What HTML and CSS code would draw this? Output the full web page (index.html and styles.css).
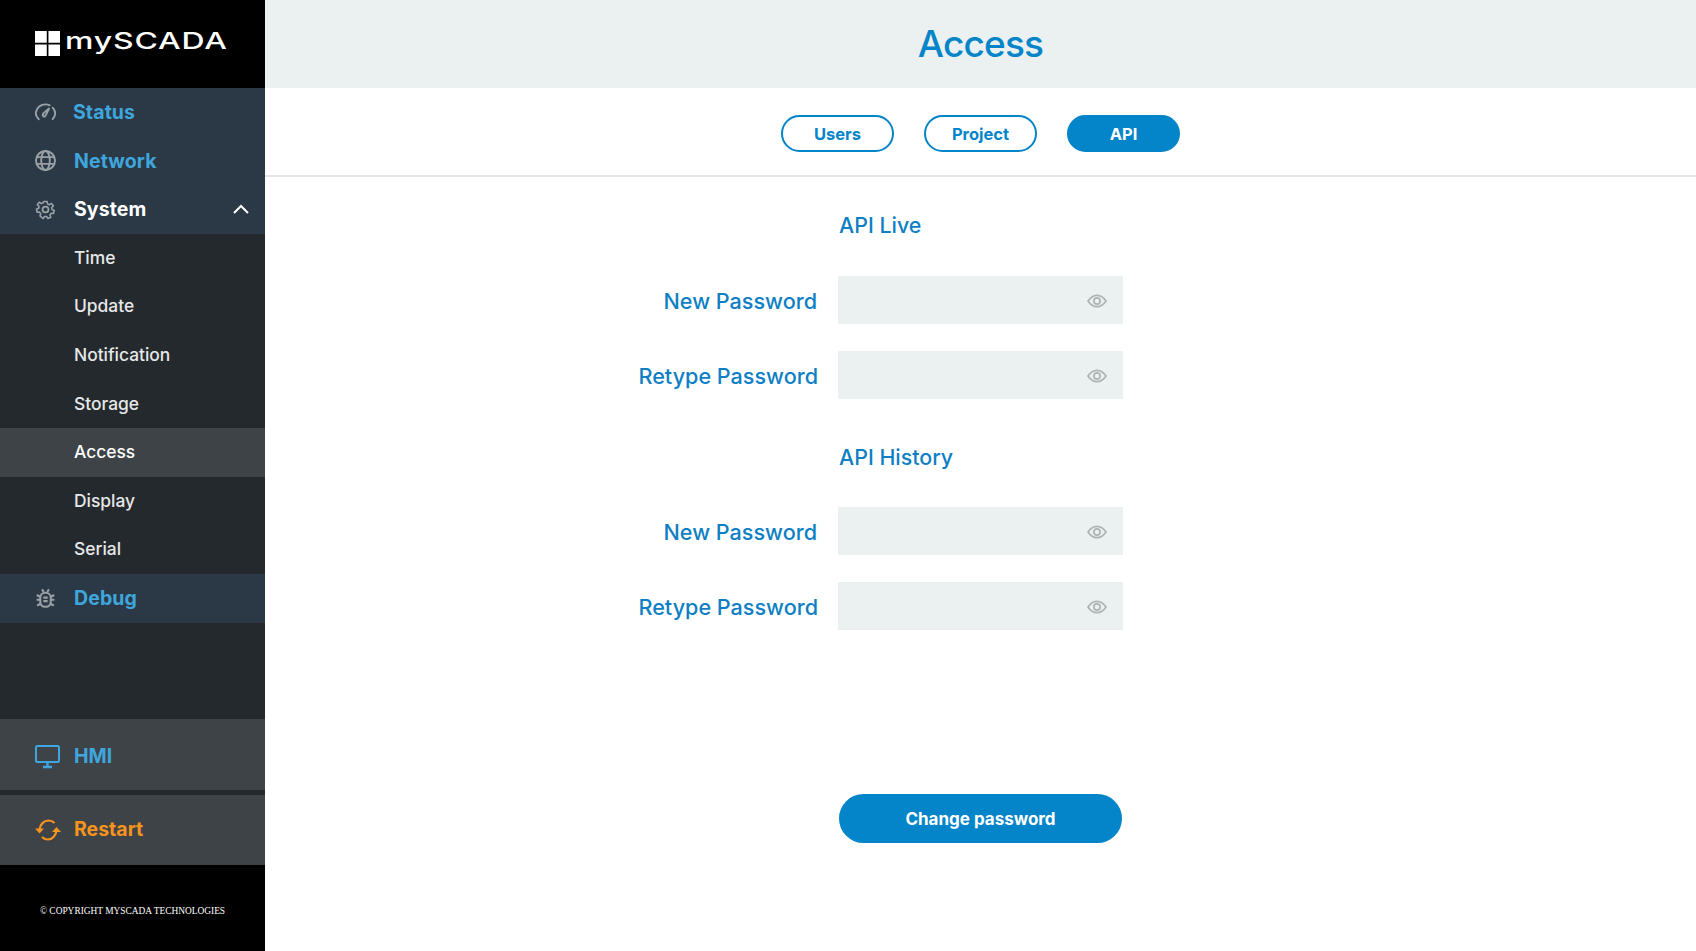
FILE: index.html
```html
<!DOCTYPE html>
<html lang="en">
<head>
<meta charset="utf-8">
<title>Access</title>
<link rel="stylesheet" href="styles.css">
</head>
<body>
<div class="app">
  <aside class="sidebar">
    <div class="brand">
      <svg class="brand-mark" viewBox="0 0 24 24"><path fill="#fff" d="M0 0h11.3v11.3H0zM12.900 0H24v11.300H12.900zM0 12.900h11.300V24H0zM12.900 12.900H24V24H12.900z"/></svg>
      <span class="brand-name">mySCADA</span>
    </div>
    <nav class="nav">
      <a class="item">
        <svg class="ico" viewBox="1 3 22 19" fill="none" stroke="#9aa1a6" stroke-width="2" stroke-linecap="round"><path d="M5 20.500C2.600 18.600 1.500 16 2 13 2.800 8.400 7 5 12 5c1.500 0 3 .3 4.300 1M19.500 8.500c2 1.900 3 4.200 2.500 7-.2 1.800-1 3.500-2.500 5"/><path d="M9.800 17.500c-.9-1-.8-2.300.2-3.300l6-5.200-3.800 7.500c-.7 1.300-1.500 1.700-2.400 1z"/></svg>
        <span class="blue status-t">Status</span>
      </a>
      <a class="item">
        <svg class="ico" viewBox="1 1 22 22" fill="none" stroke="#9aa1a6" stroke-width="2"><circle cx="12" cy="12" r="10"/><ellipse cx="12" cy="12" rx="4.500" ry="10"/><path d="M2.800 8.500h18.400M2.800 15.500h18.400"/></svg>
        <span class="blue">Network</span>
      </a>
      <a class="item">
        <svg class="ico" viewBox="0 0 24 24" fill="none" stroke="#9aa1a6" stroke-width="2" stroke-linejoin="round"><circle cx="12" cy="12" r="3.400"/><path d="M10 2h4l.6 3 2.300 1 2.600-1.700 2.400 3-2.100 2.200.4 2.500 2.800 1.100-.9 3.800-3-.1-1.500 2 1 2.800-3.500 1.700-1.700-2.500h-2.600l-1.700 2.500L5 20.100l1-2.800-1.500-2-3 .1-.9-3.800 2.800-1.100.4-2.500-2.100-2.200 2.400-3 2.600 1.700 2.300-1z" transform="translate(1.100 1.100) scale(.91)"/></svg>
        <span class="white">System</span>
        <svg class="chev" viewBox="0 0 16 10" fill="none" stroke="#fff" stroke-width="2"><path d="M1 9l7-7 7 7"/></svg>
      </a>
      <div class="subnav">
        <a class="sub">Time</a>
        <a class="sub">Update</a>
        <a class="sub">Notification</a>
        <a class="sub">Storage</a>
        <a class="sub active">Access</a>
        <a class="sub">Display</a>
        <a class="sub">Serial</a>
      </div>
      <a class="item">
        <svg class="ico" viewBox="0 0 24 24" fill="none" stroke="#9aa1a6" stroke-width="2.400"><rect x="6" y="5.500" width="12" height="16" rx="5.500"/><path d="M9.500 11h5M9.500 15h5M8 1.500l2 3M16 1.500l-2 3M2 8l4 2M22 8l-4 2M1.800 13.500H6M22.200 13.500H18M2.500 20l4-2M21.500 20l-4-2"/></svg>
        <span class="blue">Debug</span>
      </a>
    </nav>
    <a class="action first">
      <svg class="ico-lg" viewBox="0 0 26 24" fill="none" stroke="#3fa6dd" stroke-width="2"><rect x="1" y="1" width="23" height="16" rx="1.500"/><path d="M12.500 17v4M8 22h9" stroke-width="2.400"/></svg>
      <span class="blue">HMI</span>
    </a>
    <a class="action second">
      <svg class="ico-lg" viewBox="0 0 26 24" fill="none" stroke="#f7941d" stroke-width="2.200"><path d="M4.500 11.500C5 6.500 9 2.500 13.500 2.500c2.500 0 4.500 1 6 2.500"/><path d="M21.500 12c-.3 5.500-4 9.500-8.500 9.500-2.500 0-4.500-1-6-2.500"/><path fill="#f7941d" stroke="none" d="M0 10.500h9L4.500 15.500zM17 14h9l-4.500-5z"/></svg>
      <span class="orange">Restart</span>
    </a>
    <footer class="copy">© COPYRIGHT MYSCADA TECHNOLOGIES</footer>
  </aside>
  <main class="main">
    <header class="head"><h1 class="title">Access</h1></header>
    <div class="tabs">
      <button class="tab">Users</button>
      <button class="tab">Project</button>
      <button class="tab on">API</button>
    </div>
    <form class="form">
      <h2 class="section first-sec">API Live</h2>
      <label class="lab">New Password</label>
      <div class="field"><svg class="eye" viewBox="0 0 20 14" fill="none" stroke="#aeb2b3" stroke-width="1.700"><path d="M1 7c2.500-3.800 5.500-5.700 9-5.700S16.500 3.200 19 7c-2.500 3.800-5.500 5.700-9 5.700S3.500 10.800 1 7z"/><circle cx="10" cy="7" r="3.100"/></svg></div>
      <label class="lab lab2">Retype Password</label>
      <div class="field"><svg class="eye" viewBox="0 0 20 14" fill="none" stroke="#aeb2b3" stroke-width="1.700"><path d="M1 7c2.500-3.800 5.500-5.700 9-5.700S16.500 3.200 19 7c-2.500 3.800-5.500 5.700-9 5.700S3.500 10.800 1 7z"/><circle cx="10" cy="7" r="3.100"/></svg></div>
      <h2 class="section">API History</h2>
      <label class="lab">New Password</label>
      <div class="field"><svg class="eye" viewBox="0 0 20 14" fill="none" stroke="#aeb2b3" stroke-width="1.700"><path d="M1 7c2.500-3.800 5.500-5.700 9-5.700S16.500 3.200 19 7c-2.500 3.800-5.500 5.700-9 5.700S3.500 10.800 1 7z"/><circle cx="10" cy="7" r="3.100"/></svg></div>
      <label class="lab lab2">Retype Password</label>
      <div class="field"><svg class="eye" viewBox="0 0 20 14" fill="none" stroke="#aeb2b3" stroke-width="1.700"><path d="M1 7c2.500-3.800 5.500-5.700 9-5.700S16.500 3.200 19 7c-2.500 3.800-5.500 5.700-9 5.700S3.500 10.800 1 7z"/><circle cx="10" cy="7" r="3.100"/></svg></div>
      <button type="button" class="submit">Change password</button>
    </form>
  </main>
</div>
</body>
</html>
```
FILE: styles.css
```css
* { box-sizing: border-box; }
html, body { margin: 0; height: 100%; }
body { font-family: Inter, "Open Sans", sans-serif; overflow: hidden; background: #fff; }
.app { display: flex; height: 951px; }

.sidebar { width: 265px; flex: none; display: flex; flex-direction: column; background: #24292d; }
.brand { height: 88px; background: #000; display: flex; align-items: center; padding: 0 0 5px 35px; gap: 5px; }
.brand-mark { width: 25px; height: 25px; flex: none; margin-top: 3px; }
.brand-name { color: #fff; font-size: 23px; font-weight: 500; line-height: 1; letter-spacing: .6px; transform: scaleX(1.39); transform-origin: left center; }

.nav { flex: 1; }
.item { height: 48.7px; background: #2a3945; display: flex; align-items: center; padding: 0 0 1px 35px; font-size: 19.5px; font-weight: 700; letter-spacing: .1px; }
.ico { width: 21px; height: 21px; flex: none; margin-right: 18px; }
.blue { color: #3fa6dd; }
.white { color: #fff; }
.orange { color: #f7941d; }
.status-t { margin-left: -1px; }
.chev { width: 16px; height: 10px; margin-left: auto; margin-right: 16px; }

.sub { height: 48.6px; display: flex; align-items: center; padding: 0 0 2px 74px; color: #e6e8e9; font-size: 17.4px; font-weight: 500; }
.sub.active { background: #3e4348; color: #fff; }

.action { height: 70px; background: #3e4348; display: flex; align-items: center; padding-left: 35px; font-size: 19.5px; font-weight: 700; }
.action.first { height: 71px; margin-bottom: 5px; padding-top: 2px; }
.action.second { padding-bottom: 3px; }
.ico-lg { width: 26px; height: 24px; flex: none; margin-right: 13px; margin-top: 3px; }

.copy { height: 86px; background: #000; color: #fff; display: flex; align-items: center; justify-content: center; font-family: "Liberation Serif", serif; font-size: 9.4px; padding-top: 6px; }

.main { flex: 1; min-width: 0; }
.head { height: 88px; background: #ebf0f0; display: flex; align-items: center; justify-content: center; padding-bottom: 2px; }
.title { margin: 0; color: #0485c9; font-size: 37px; font-weight: 500; letter-spacing: -.8px; }
.tabs { height: 89px; border-bottom: 2px solid #e4e6e6; display: flex; justify-content: center; align-items: flex-start; gap: 30px; padding: 27px 0 0 0; }
.tab { width: 113px; height: 37px; border: 2px solid #0485c9; border-radius: 19px; background: #fff; color: #0485c9; font: 700 16.5px Inter, sans-serif; padding: 0; }
.tab.on { background: #0485c9; color: #fff; }

.form { display: grid; grid-template-columns: 1fr 285px 1fr; column-gap: 20px; align-items: center; }
.section { grid-column: 2; margin: 0; height: 26px; line-height: 26px; color: #0e7fc4; font-size: 21.4px; font-weight: 500; padding-left: 1px; white-space: nowrap; }
.first-sec { margin-top: 35px; margin-bottom: 38px; }
.lab { grid-column: 1; margin-bottom: 25px; text-align: right; color: #0e7fc4; font-size: 21.6px; font-weight: 500; padding-right: 1px; }
.lab2 { padding-right: 0; }
.field { grid-column: 2; height: 48px; margin-bottom: 27px; background: #ebf0f0; display: flex; align-items: center; justify-content: flex-end; padding: 1px 16px 0 0; }
.field + .section { margin-top: 18px; margin-bottom: 37px; }
.eye { width: 20px; height: 14px; }
.submit { grid-column: 2; width: 283px; height: 49px; margin: 137px 0 0 1px; border: 0; border-radius: 25px; background: #0485c9; color: #fff; font: 700 17px Inter, sans-serif; }
```
